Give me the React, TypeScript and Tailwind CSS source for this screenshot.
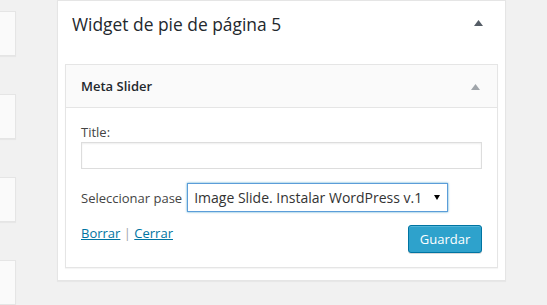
const font = { fontFamily: '"Open Sans", "Liberation Sans", sans-serif' }

function ArrowUp({ className }: { className: string }) {
  return (
    <svg width="9" height="6" viewBox="0 0 9 6" className={className}>
      <path d="M4.5 0 L9 6 L0 6 Z" fill="currentColor" />
    </svg>
  )
}

function SideStub() {
  return <div className="h-[45px] w-[16px] bg-[#fafafa] border border-l-0 border-[#e5e5e5] shadow-[0_1px_1px_rgba(0,0,0,0.04)]" />
}

export default function App() {
  return (
    <div className="w-[547px] h-[305px] bg-[#f1f1f1] flex overflow-hidden" style={font}>
      <div className="flex flex-col gap-[38px] pt-[11px]">
        <SideStub />
        <SideStub />
        <SideStub />
        <SideStub />
      </div>

      <div className="ml-[41px] w-[449px] h-[281px] bg-white border border-[#e5e5e5] shadow-[0_1px_1px_rgba(0,0,0,0.04)] flex flex-col">
        <div className="h-[63px] flex justify-between pl-[14px] pr-[22px] pt-[11px]">
          <h3 className="text-[17.4px] leading-[24px] text-[#23282d]">Widget de pie de página 5</h3>
          <ArrowUp className="mt-[8px] text-[#555d66]" />
        </div>

        <div className="mx-[7px] border border-[#e5e5e5] bg-white shadow-[0_1px_1px_rgba(0,0,0,0.04)]">
          <div className="h-[43px] bg-[#fafafa] border-b border-[#e5e5e5] flex items-center justify-between pl-[15px] pr-[17px]">
            <h4 className="text-[13px] leading-[18px] font-semibold text-[#23282d]">Meta Slider</h4>
            <ArrowUp className="mt-[2px] text-[#a0a5aa]" />
          </div>

          <div className="px-[15px] pt-[15px] pb-[14px] text-[13px] leading-[18px] text-[#444]">
            <label className="block">Title:</label>
            <input
              type="text"
              className="mt-[1px] block w-full h-[27px] border border-[#ddd] bg-white shadow-[inset_0_1px_2px_rgba(0,0,0,0.07)] outline-none"
            />

            <div className="mt-[14px] flex items-center gap-[5px]">
              <span>Seleccionar pase</span>
              <div className="w-[261px] h-[29px] border border-[#5b9dd9] shadow-[0_0_2px_rgba(30,140,190,0.8)] bg-white flex items-center justify-between pl-[6px] pr-[7px]">
                <span className="text-[14px] text-[#333]">Image Slide. Instalar WordPress v.1</span>
                <svg width="6" height="5" viewBox="0 0 6 5">
                  <path d="M0 0 L6 0 L3 5 Z" fill="#000" />
                </svg>
              </div>
            </div>

            <div className="mt-[13px] flex items-start justify-between">
              <div className="-mt-px">
                <a href="#" className="text-[#0074a2] underline">Borrar</a>
                <span className="text-[#a0a5aa]"> | </span>
                <a href="#" className="text-[#0074a2] underline">Cerrar</a>
              </div>
              <button className="w-[74px] h-[28px] rounded-[3px] bg-[#2ea2cc] border border-[#0074a2] text-white text-[13px] shadow-[inset_0_1px_0_rgba(120,200,230,0.5),0_1px_0_rgba(0,0,0,0.15)]">
                Guardar
              </button>
            </div>
          </div>
        </div>
      </div>
    </div>
  )
}
